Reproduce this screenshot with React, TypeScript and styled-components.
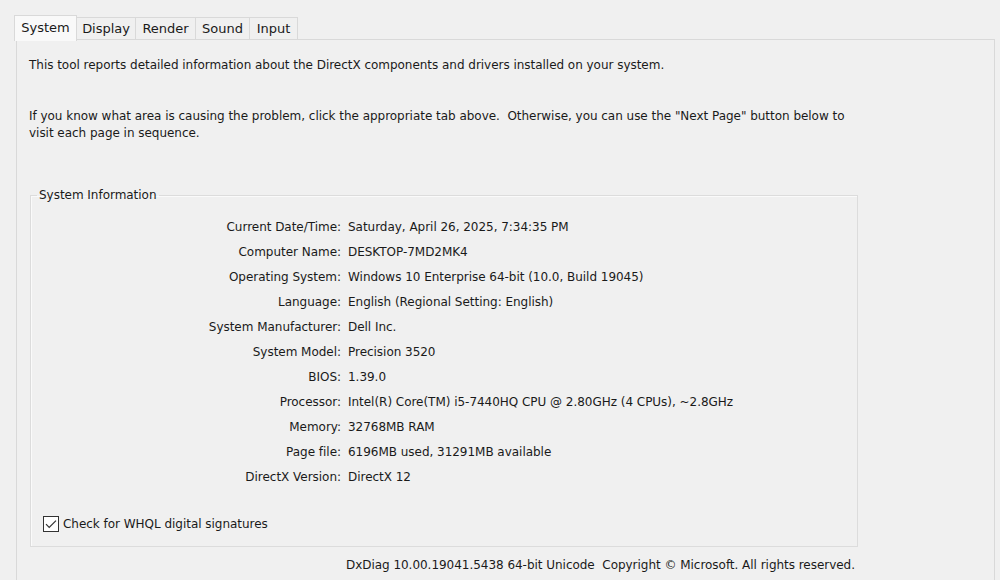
import React from "react";
import styled, { createGlobalStyle } from "styled-components";

const GlobalStyle = createGlobalStyle`
  html, body {
    margin: 0;
    padding: 0;
    background: #f0f0f0;
  }
  body {
    font-family: "DejaVu Sans", "Liberation Sans", sans-serif;
    font-size: 12px;
    letter-spacing: -0.03px;
    color: #1a1a1a;
  }
`;

const Window = styled.div`
  width: 1000px;
  height: 580px;
  box-sizing: border-box;
  padding: 15px 5px 0 16px;
  display: flex;
  flex-direction: column;
  overflow: hidden;
`;

const TabStrip = styled.div`
  display: flex;
  align-items: flex-end;
  height: 25px;
  position: relative;
  z-index: 1;
`;

const Tab = styled.div<{ $active?: boolean; $first?: boolean; $w: number }>`
  box-sizing: border-box;
  height: ${({ $active }) => ($active ? "26px" : "23px")};
  width: ${({ $w }) => `${$w}px`};
  margin: 0 ${({ $active }) => ($active ? "-1px" : "0")}
    ${({ $active }) => ($active ? "-1px" : "0")}
    ${({ $active }) => ($active ? "-2px" : "0")};
  padding: 0 5px ${({ $active }) => ($active ? "3px" : "1px")};
  display: flex;
  align-items: center;
  justify-content: center;
  border: 1px solid #d9d9d9;
  border-bottom: ${({ $active }) => ($active ? "none" : "1px solid #d9d9d9")};
  border-left: ${({ $active, $first }) =>
    $active || $first ? "1px solid #d9d9d9" : "none"};
  background: ${({ $active }) => ($active ? "#f9f9f9" : "#f0f0f0")};
  font-size: 13px;
  white-space: nowrap;
`;

const Panel = styled.div`
  flex: 1;
  border: 1px solid #d9d9d9;
  border-bottom: none;
  margin-top: -1px;
  padding: 17px 12px 0 12px;
  display: flex;
  flex-direction: column;
`;

const Para = styled.p<{ $gap?: number }>`
  margin: 0 0 ${({ $gap }) => $gap ?? 0}px 0;
  line-height: 17px;
  max-width: 830px;
`;

const GroupBox = styled.fieldset`
  margin: 0 0 0 1px;
  width: 828px;
  box-sizing: border-box;
  border: 1px solid #dcdcdc;
  box-shadow: inset 1px 1px 0 #fafafa;
  padding: 10px 6px 14px 6px;
`;

const GroupLabel = styled.legend`
  padding: 0 2px;
  line-height: 17px;
`;

const InfoGrid = styled.div`
  display: grid;
  grid-template-columns: 304px 1fr;
  column-gap: 7px;
  grid-auto-rows: 25px;
  align-items: center;
  margin-bottom: 26px;
`;

const Label = styled.div`
  text-align: right;
  white-space: nowrap;
`;

const Value = styled.div`
  white-space: nowrap;
`;

const CheckRow = styled.label`
  display: flex;
  align-items: center;
  gap: 4px;
  margin-left: 6px;
  height: 17px;
`;

const CheckBox = styled.span`
  width: 16px;
  height: 16px;
  box-sizing: border-box;
  border: 1px solid #333;
  background: #fff;
  display: flex;
  align-items: center;
  justify-content: center;
`;

const Footer = styled.div`
  width: 828px;
  margin: 10px 0 0 1px;
  padding-right: 3px;
  box-sizing: border-box;
  text-align: right;
  line-height: 17px;
  white-space: nowrap;
`;

const tabs = [
  { name: "System", w: 63 },
  { name: "Display", w: 60 },
  { name: "Render", w: 60 },
  { name: "Sound", w: 54 },
  { name: "Input", w: 48 },
];

const rows: [string, string][] = [
  ["Current Date/Time:", "Saturday, April 26, 2025, 7:34:35 PM"],
  ["Computer Name:", "DESKTOP-7MD2MK4"],
  ["Operating System:", "Windows 10 Enterprise 64-bit (10.0, Build 19045)"],
  ["Language:", "English (Regional Setting: English)"],
  ["System Manufacturer:", "Dell Inc."],
  ["System Model:", "Precision 3520"],
  ["BIOS:", "1.39.0"],
  ["Processor:", "Intel(R) Core(TM) i5-7440HQ CPU @ 2.80GHz (4 CPUs), ~2.8GHz"],
  ["Memory:", "32768MB RAM"],
  ["Page file:", "6196MB used, 31291MB available"],
  ["DirectX Version:", "DirectX 12"],
];

export default function App() {
  return (
    <>
      <GlobalStyle />
      <Window>
        <TabStrip>
          {tabs.map((t, i) => (
            <Tab key={t.name} $active={i === 0} $first={i === 1} $w={t.w}>
              {t.name}
            </Tab>
          ))}
        </TabStrip>
        <Panel>
          <Para $gap={34}>
            This tool reports detailed information about the DirectX components
            and drivers installed on your system.
          </Para>
          <Para $gap={45}>
            If you know what area is causing the problem, click the appropriate
            tab above.&nbsp; Otherwise, you can use the "Next Page" button below
            to visit each page in sequence.
          </Para>
          <GroupBox>
            <GroupLabel>System Information</GroupLabel>
            <InfoGrid>
              {rows.map(([k, v]) => (
                <React.Fragment key={k}>
                  <Label>{k}</Label>
                  <Value>{v}</Value>
                </React.Fragment>
              ))}
            </InfoGrid>
            <CheckRow>
              <CheckBox>
                <svg width="12" height="10" viewBox="0 0 12 10">
                  <path
                    d="M1 5.2 L4.2 8.4 L11 1.6"
                    fill="none"
                    stroke="#333"
                    strokeWidth="1.2"
                  />
                </svg>
              </CheckBox>
              Check for WHQL digital signatures
            </CheckRow>
          </GroupBox>
          <Footer>
            DxDiag 10.00.19041.5438 64-bit Unicode&nbsp; Copyright © Microsoft.
            All rights reserved.
          </Footer>
        </Panel>
      </Window>
    </>
  );
}
